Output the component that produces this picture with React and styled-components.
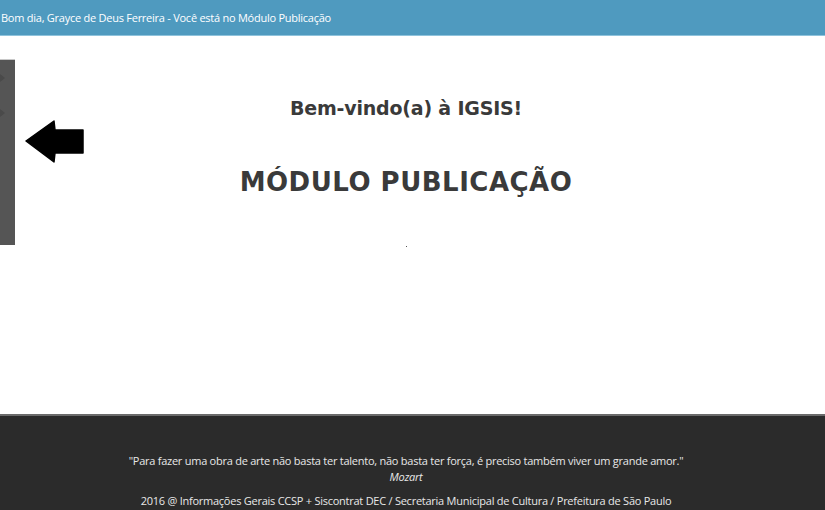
import React from "react";
import styled, { createGlobalStyle } from "styled-components";

const Global = createGlobalStyle`
  html, body { margin: 0; padding: 0; background: #fff; }
  body { font-family: "Open Sans", "Noto Sans", sans-serif; }
`;

const Page = styled.div`
  position: relative;
  min-height: 510px;
  display: flex;
  flex-direction: column;
`;

const TopBar = styled.header`
  height: 35px;
  background: #4f9abf;
  border-bottom: 1px solid #8fc3dc;
  display: flex;
  align-items: center;
  padding: 0 0 0 1px;
  color: #fff;
  font-size: 11px;
  letter-spacing: -0.25px;
  line-height: 1;
`;

const Main = styled.main`
  height: 378px;
  display: flex;
  flex-direction: column;
  align-items: center;
  padding-right: 13px;
  padding-top: 60px;
  box-sizing: border-box;
`;

const Welcome = styled.h2`
  margin: 0;
  font-family: "DejaVu Sans", sans-serif;
  font-weight: 700;
  font-size: 19px;
  letter-spacing: -0.2px;
  color: #3a3a3a;
  line-height: 24px;
`;

const Module = styled.h1`
  margin: 46px 0 0;
  font-family: "DejaVu Sans", sans-serif;
  font-weight: 700;
  font-size: 26px;
  letter-spacing: 0.5px;
  color: #3a3a3a;
  line-height: 32px;
`;

const Dot = styled.span`
  display: block;
  width: 1px;
  height: 1px;
  margin-top: 48px;
  background: #555;
`;

const Footer = styled.footer`
  flex: 1;
  background: #2b2b2b;
  border-top: 2px solid #6a6a6a;
  display: flex;
  flex-direction: column;
  align-items: center;
  padding: 37px 13px 0 0;
  color: #e8e8e8;
  font-size: 11px;
  letter-spacing: -0.25px;
  line-height: 16px;
`;

const Quote = styled.p`
  margin: 0;
  text-align: center;
`;

const Author = styled.em`
  display: block;
`;

const Copy = styled.p`
  margin: 8px 0 0;
`;

const SideMenu = styled.nav`
  position: absolute;
  left: 0;
  top: 59px;
  width: 15px;
  height: 186px;
  background: #555;
  border-top: 1px solid #c8c8c8;
  box-sizing: border-box;
  display: flex;
  flex-direction: column;
  gap: 27px;
  padding-top: 14px;
`;

const Marker = styled.span`
  display: block;
  width: 0;
  height: 0;
  border-top: 4px solid transparent;
  border-bottom: 4px solid transparent;
  border-left: 5px solid #4a4a4a;
`;

const Hint = styled.svg`
  position: absolute;
  left: 25px;
  top: 120px;
`;

export default function App() {
  return (
    <Page>
      <Global />
      <TopBar>Bom dia, Grayce de Deus Ferreira - Você está no Módulo Publicação</TopBar>
      <Main>
        <Welcome>Bem-vindo(a) à IGSIS!</Welcome>
        <Module>MÓDULO PUBLICAÇÃO</Module>
        <Dot />
      </Main>
      <Footer>
        <Quote>
          "Para fazer uma obra de arte não basta ter talento, não basta ter força, é preciso também viver um grande amor."
          <Author>Mozart</Author>
        </Quote>
        <Copy>2016 @ Informações Gerais CCSP + Siscontrat DEC / Secretaria Municipal de Cultura / Prefeitura de São Paulo</Copy>
      </Footer>
      <SideMenu>
        <Marker />
        <Marker />
      </SideMenu>
      <Hint width="59" height="44" viewBox="0 0 59 44">
        <path d="M1 21 L29 1 L30 10 L58 10 L58 33 L30 33 L29 42 Z" fill="#000" stroke="#000" strokeLinejoin="round" strokeWidth="1.5" />
      </Hint>
    </Page>
  );
}
